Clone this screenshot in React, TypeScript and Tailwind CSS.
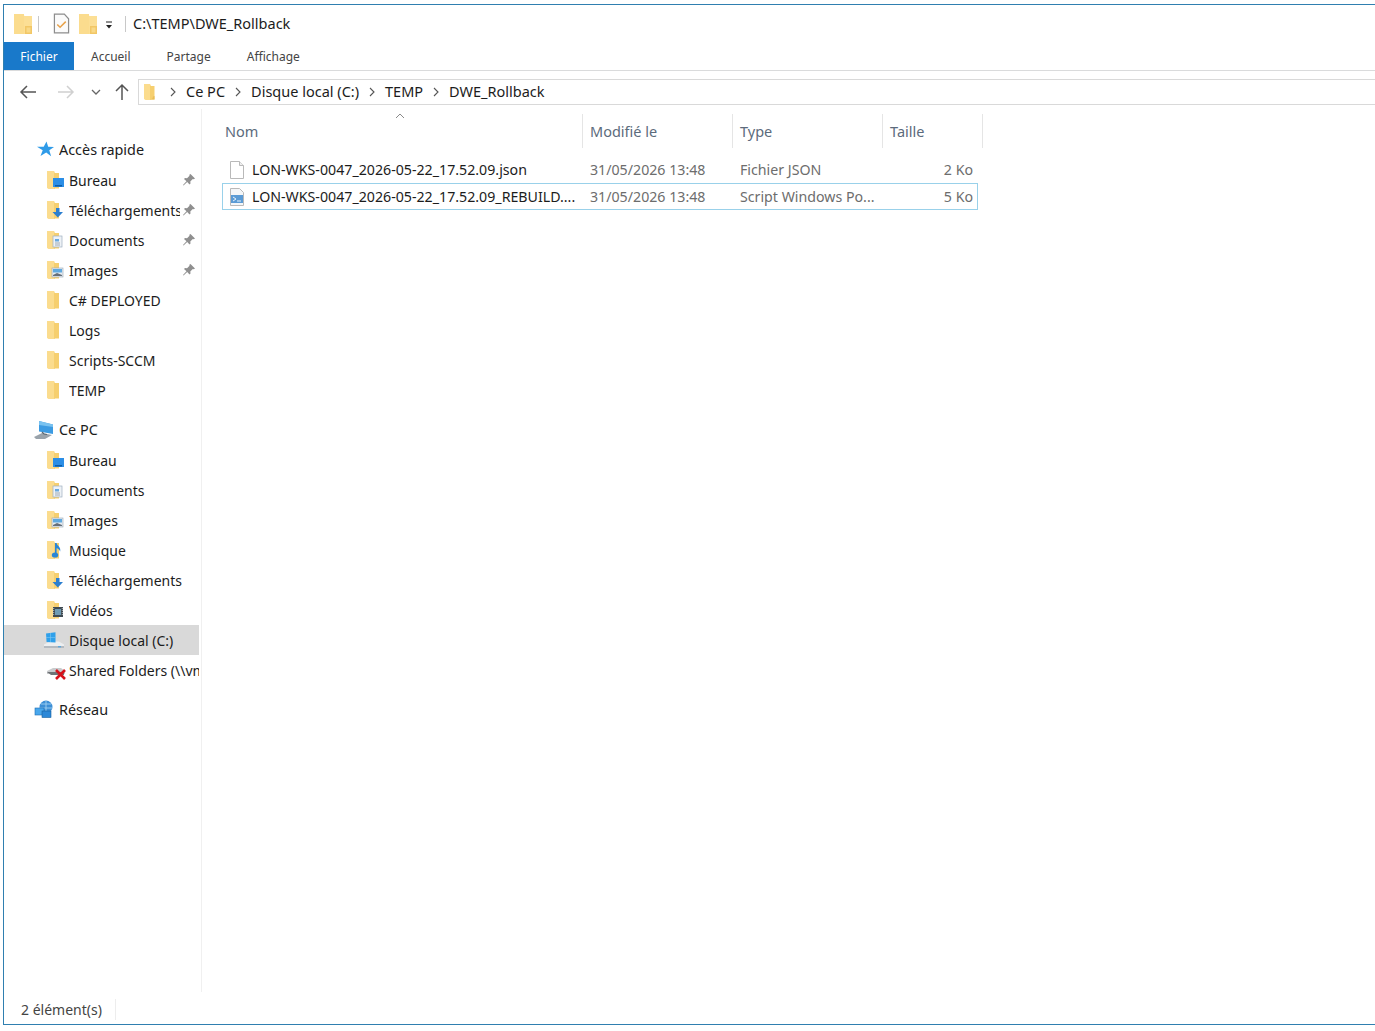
import type { ReactNode } from 'react';

const font = { fontFamily: '"Noto Sans", "Open Sans", sans-serif' };

function Folder({ className = 'w-[20px] h-[20px]' }: { className?: string }) {
  return (
    <svg viewBox="0 0 20 20" className={className}>
      <path d="M3 2h6l1 1.500V18H4.500L3 17z" fill="#fbdc8e" />
      <path d="M9 4h4.500v13.500H9z" fill="#f6cf6f" />
      <path d="M9 17.600h4.500V14l-1.500.5-.5 2z" fill="#e9bd57" />
    </svg>
  );
}

// the quick access toolbar folder is wider than the nav ones
function BigFolder() {
  return (
    <svg viewBox="0 0 18 20" className="w-[18px] h-[20px] shrink-0">
      <path d="M0 0h9l1.500 2H18v20H0z" fill="#fcdf95" />
      <path d="M0 0h10v20H0z" fill="#fbdc8e" />
      <path d="M11 12h7v8h-7z" fill="#f2c766" />
      <path d="M12.500 13.500h4v5h-4z" fill="#f9d988" />
    </svg>
  );
}

function Badge({ kind }: { kind: string }) {
  if (kind === 'desktop')
    return (
      <g>
        <rect x="8" y="8" width="11" height="9" fill="#2b8ee6" />
        <rect x="10" y="15" width="7" height="1.500" fill="#0c5da8" />
      </g>
    );
  if (kind === 'download')
    return <path d="M11 8h3.500v4H18l-5.200 5.500L7.500 12H11z" fill="#2b7fd0" />;
  if (kind === 'docs')
    return (
      <g>
        <rect x="8" y="6" width="9" height="11" fill="#eef2f6" stroke="#9fb0c0" strokeWidth="0.7" />
        <rect x="10" y="9" width="4" height="2.500" fill="#6aa9df" />
        <path d="M10 13h5M10 15h5" stroke="#8c9aa8" strokeWidth="0.8" />
      </g>
    );
  if (kind === 'images')
    return (
      <g>
        <rect x="7" y="8" width="11" height="9" fill="#e6ecf1" stroke="#98a6b2" strokeWidth="0.6" />
        <rect x="8" y="9" width="9" height="3.500" fill="#5fa9e0" />
        <path d="M8 15l4-2 5 2v1H8z" fill="#66707a" />
      </g>
    );
  if (kind === 'music')
    return (
      <g>
        <ellipse cx="10" cy="15" rx="3.200" ry="2.600" fill="#2a86d6" />
        <path d="M11.600 3v12h-1.600V3zM11.600 3c.5 3 4.500 3.500 3.600 8.500-.7-2-2.200-3-3.600-3.200z" fill="#2a86d6" />
      </g>
    );
  return (
    <g>
      <rect x="8" y="7" width="10" height="10" fill="#3f4a52" />
      <rect x="10" y="9" width="6" height="6" fill="#6e9bb4" />
      <path d="M8.700 8v8M17.300 8v8" stroke="#d5dde2" strokeWidth="0.8" strokeDasharray="1 1" />
    </g>
  );
}

function LibIcon({ kind }: { kind?: string }) {
  return (
    <svg viewBox="0 0 20 20" className="w-[20px] h-[20px] shrink-0">
      <path d="M2 1h7l1 1.500V19H3.500L2 18z" fill="#fbdc8e" />
      <path d="M9 3h5v15.500H9z" fill="#f6cf6f" />
      {kind && <Badge kind={kind} />}
    </svg>
  );
}

function DriveIcon() {
  return (
    <svg viewBox="0 0 22 20" className="w-[22px] h-[20px] shrink-0 ml-[-2px]">
      <path d="M1 14.500l6-3h9l5 3v2.500H1z" fill="#eceef0" />
      <path d="M1 16h20v2H1z" fill="#b4bac0" />
      <rect x="15" y="16.300" width="3" height="1" fill="#3aa0e6" />
      <path d="M3 3.500l9.500-1.300v10.400L3.600 12z" fill="#2fa0ea" />
      <path d="M3 7.500h9.500M7.500 3v9" stroke="#7cc6f2" strokeWidth="0.6" />
    </svg>
  );
}

function NetDriveIcon() {
  return (
    <svg viewBox="0 0 22 20" className="w-[22px] h-[20px] shrink-0">
      <path d="M2 11l6-3h8l4 3v3H2z" fill="#c9cbcd" />
      <path d="M2 12h17v3H6z" fill="#6f7376" />
      <path d="M11 10l9 9M20 10l-9 9" stroke="#d6121b" strokeWidth="2.600" />
    </svg>
  );
}

function PcIcon() {
  return (
    <svg viewBox="0 0 22 20" className="w-[22px] h-[20px] shrink-0 ml-[-2px]">
      <path d="M6 1l14 3.500v9.500L6 11.500z" fill="#3c9be2" />
      <path d="M6 1l14 3.500v2.500L6 5z" fill="#79c2f0" />
      <path d="M1 17l8-4 10 2-7 4H3z" fill="#9aa3ab" />
      <path d="M9 12l2 2 3 .5" stroke="#5c6873" strokeWidth="1.200" fill="none" />
    </svg>
  );
}

function NetworkIcon() {
  return (
    <svg viewBox="0 0 22 20" className="w-[22px] h-[20px] shrink-0 ml-[-2px]">
      <circle cx="13" cy="7" r="6.500" fill="#3d8fd6" />
      <path d="M8 4h10M7 8h12M13 1v12" stroke="#9fd0f2" strokeWidth="0.9" />
      <rect x="2" y="8" width="9" height="7" fill="#49a7ec" stroke="#1b6db4" strokeWidth="0.6" />
      <rect x="9" y="11" width="9" height="6.500" fill="#2c88d8" stroke="#17609f" strokeWidth="0.6" />
    </svg>
  );
}

function StarIcon() {
  return (
    <svg viewBox="0 0 20 20" className="w-[20px] h-[20px] shrink-0">
      <path d="M11.500 1.500l1.700 5.300 5.800.1-4.700 3.400 1.800 6-4.900-3.700-5.700 3.500 2.200-5.800L2 6.700l6.700.1z" fill="#2f9be8" />
    </svg>
  );
}

function Pin() {
  return (
    <svg viewBox="0 0 14 14" className="w-[14px] h-[14px] shrink-0">
      <path d="M8.500 1l4.500 4.500-1.200.8-1-.3L8.300 8.500l.2 2-1 1-2.300-2.500L1.500 12.500 1 12l3.500-3.700L2 6l1-1 2 .2L7.500 2.700l-.2-.9z" fill="#8f8f8f" />
    </svg>
  );
}

function Row({ icon, label, pin, active, head, clip }: { icon: ReactNode; label: string; pin?: boolean; active?: boolean; head?: boolean; clip?: boolean }) {
  return (
    <div className={`flex items-center h-[30px] w-[195px] ${active ? 'bg-[#d9d9d9]' : ''} ${head ? 'pl-[31px]' : 'pl-[41px]'}`}>
      <span className="w-[24px] shrink-0 flex items-center">{icon}</span>
      <span className={`${head ? 'text-[14.400px]' : 'text-[14px]'} text-[#1c1c1c] whitespace-nowrap overflow-hidden ${clip ? 'w-[111px]' : 'flex-1'}`}>{label}</span>
      {pin && (
        <span className="ml-auto mr-[3px]">
          <Pin />
        </span>
      )}
    </div>
  );
}

function Crumb({ label }: { label: string }) {
  return (
    <>
      <span className="text-[14.500px] text-[#1c1c1c]">{label}</span>
      <svg viewBox="0 0 8 10" className="w-[8px] h-[10px] mx-[9px]">
        <path d="M2 1l4 4-4 4" stroke="#555" strokeWidth="1.100" fill="none" />
      </svg>
    </>
  );
}

function HeaderCell({ label, width, pad = 'pl-[7px]' }: { label: string; width: string; pad?: string }) {
  return (
    <div className={`${width} ${pad} h-[34px] pt-[1px] border-r border-[#e5e5e5] flex items-center text-[14.500px] text-[#5c6b7c]`}>
      {label}
    </div>
  );
}

export default function App() {
  return (
    <div style={font} className="w-[1375px] h-[1031px] bg-white pt-[4px] pb-[6px] pl-[3px] overflow-hidden">
      <div className="h-full border-l border-t border-b border-[#2f7fb0] flex flex-col">
        {/* Title bar */}
        <div className="h-[37px] flex items-center shrink-0">
          <span className="ml-[10px]">
            <BigFolder />
          </span>
          <span className="w-px h-[16px] bg-[#c8c8c8] ml-[6px]" />
          <svg viewBox="0 0 18 22" className="w-[17px] h-[21px] ml-[14px]">
            <path d="M1.500 1h10.500l4.500 5v15H1.500z" fill="#fbfbfb" stroke="#8d8d8d" strokeWidth="1.300" />
            <path d="M4.500 12l3 3 6-6" stroke="#e8a24a" strokeWidth="1.600" fill="none" />
          </svg>
          <span className="ml-[9px]">
            <BigFolder />
          </span>
          <svg viewBox="0 0 10 10" className="w-[10px] h-[10px] ml-[7px] mt-[3px]">
            <path d="M2 2h6" stroke="#222" strokeWidth="1" />
            <path d="M2 5h6L5 8.500z" fill="#222" />
          </svg>
          <span className="w-px h-[16px] bg-[#c8c8c8] ml-[11px]" />
          <span className="ml-[7px] text-[14.500px] text-[#1c1c1c]">C:\TEMP\DWE_Rollback</span>
        </div>

        {/* Ribbon tabs */}
        <div className="h-[29px] flex items-stretch border-b border-[#dadbdc] shrink-0 text-[12px] text-[#444]">
          <div className="w-[70px] bg-[#1979ca] text-white flex items-center justify-center pt-[2px]">Fichier</div>
          <div className="ml-[17px] flex items-center pt-[2px]">Accueil</div>
          <div className="ml-[36px] flex items-center pt-[2px]">Partage</div>
          <div className="ml-[36px] flex items-center pt-[2px]">Affichage</div>
        </div>

        {/* Address bar */}
        <div className="h-[34px] flex items-center shrink-0 mt-[4px]">
          <svg viewBox="0 0 18 14" className="w-[18px] h-[14px] ml-[15px]">
            <path d="M17 7H2M8 1L2 7l6 6" stroke="#555" strokeWidth="1.500" fill="none" />
          </svg>
          <svg viewBox="0 0 18 14" className="w-[18px] h-[14px] ml-[20px]">
            <path d="M1 7h15M10 1l6 6-6 6" stroke="#d0d0d0" strokeWidth="1.500" fill="none" />
          </svg>
          <svg viewBox="0 0 10 6" className="w-[10px] h-[6px] ml-[16px]">
            <path d="M1 1l4 4 4-4" stroke="#666" strokeWidth="1.300" fill="none" />
          </svg>
          <svg viewBox="0 0 14 18" className="w-[14px] h-[18px] ml-[14px]">
            <path d="M7 17V2M1 8l6-6 6 6" stroke="#555" strokeWidth="1.500" fill="none" />
          </svg>
          <div className="ml-[9px] flex-1 h-[26px] border-t border-b border-l border-[#d9d9d9] flex items-center">
            <span className="ml-[2px]">
              <Folder />
            </span>
            <svg viewBox="0 0 8 10" className="w-[8px] h-[10px] ml-[8px] mr-[9px]">
              <path d="M2 1l4 4-4 4" stroke="#555" strokeWidth="1.100" fill="none" />
            </svg>
            <Crumb label="Ce PC" />
            <Crumb label="Disque local (C:)" />
            <Crumb label="TEMP" />
            <span className="text-[14.500px] text-[#1c1c1c]">DWE_Rollback</span>
          </div>
        </div>

        {/* Main */}
        <div className="flex-1 flex min-h-0">
          <nav className="w-[198px] border-r border-[#f0f0f0] shrink-0 pt-[26px] mb-[2px]">
            <Row head icon={<StarIcon />} label="Accès rapide" />
            <Row icon={<LibIcon kind="desktop" />} label="Bureau" pin />
            <Row icon={<LibIcon kind="download" />} label="Téléchargements" pin clip />
            <Row icon={<LibIcon kind="docs" />} label="Documents" pin />
            <Row icon={<LibIcon kind="images" />} label="Images" pin />
            <Row icon={<LibIcon />} label="C# DEPLOYED" />
            <Row icon={<LibIcon />} label="Logs" />
            <Row icon={<LibIcon />} label="Scripts-SCCM" />
            <Row icon={<LibIcon />} label="TEMP" />
            <div className="h-[10px]" />
            <Row head icon={<PcIcon />} label="Ce PC" />
            <Row icon={<LibIcon kind="desktop" />} label="Bureau" />
            <Row icon={<LibIcon kind="docs" />} label="Documents" />
            <Row icon={<LibIcon kind="images" />} label="Images" />
            <Row icon={<LibIcon kind="music" />} label="Musique" />
            <Row icon={<LibIcon kind="download" />} label="Téléchargements" />
            <Row icon={<LibIcon kind="video" />} label="Vidéos" />
            <Row active icon={<DriveIcon />} label="Disque local (C:)" />
            <Row icon={<NetDriveIcon />} label="Shared Folders (\\vmware-host)" />
            <div className="h-[10px]" />
            <Row head icon={<NetworkIcon />} label="Réseau" />
          </nav>

          <main className="flex-1 pl-[20px] pt-[5px]">
            <div className="relative flex">
              <svg viewBox="0 0 10 6" className="absolute left-[173px] top-[-1px] w-[10px] h-[6px]">
                <path d="M1 5l4-4 4 4" stroke="#8a8a8a" strokeWidth="1" fill="none" />
              </svg>
              <HeaderCell label="Nom" width="w-[361px]" pad="pl-[3px]" />
              <HeaderCell label="Modifié le" width="w-[150px]" />
              <HeaderCell label="Type" width="w-[150px]" />
              <HeaderCell label="Taille" width="w-[100px]" />
            </div>

            <div className="mt-[8px] w-[756px] h-[27px] border border-transparent flex items-center text-[14.200px]">
              <svg viewBox="0 0 16 18" className="w-[16px] h-[18px] ml-[6px] shrink-0">
                <path d="M1.500.5h9l4 4v13h-13z" fill="#fff" stroke="#b9b9b9" />
                <path d="M10.500.5v4h4" fill="#f0f0f0" stroke="#b9b9b9" />
              </svg>
              <span className="w-[338px] ml-[7px] text-[#1c1c1c] whitespace-nowrap">LON-WKS-0047_2026-05-22_17.52.09.json</span>
              <span className="w-[150px] text-[#6d6d6d]">31/05/2026 13:48</span>
              <span className="w-[155px] text-[#6d6d6d]">Fichier JSON</span>
              <span className="w-[78px] text-right text-[#6d6d6d]">2 Ko</span>
            </div>
            <div className="w-[756px] h-[27px] border border-[#99d1ea] flex items-center text-[14.200px]">
              <svg viewBox="0 0 16 18" className="w-[16px] h-[18px] ml-[6px] shrink-0">
                <path d="M1.500.5h9l4 4v13h-13z" fill="#f4f6f8" stroke="#b9b9b9" />
                <rect x="2" y="7" width="12" height="8" fill="#5b9bd5" />
                <path d="M4 9l3 2-3 2M8 13h4" stroke="#e8f2fa" fill="none" />
              </svg>
              <span className="w-[338px] ml-[7px] text-[#1c1c1c] whitespace-nowrap">LON-WKS-0047_2026-05-22_17.52.09_REBUILD....</span>
              <span className="w-[150px] text-[#6d6d6d]">31/05/2026 13:48</span>
              <span className="w-[155px] text-[#6d6d6d]">Script Windows Po...</span>
              <span className="w-[78px] text-right text-[#6d6d6d]">5 Ko</span>
            </div>
          </main>
        </div>

        {/* Status bar */}
        <div className="h-[30px] shrink-0 flex items-center pl-[17px] text-[14px] text-[#444]">
          <span className="w-[95px] border-r border-[#ededed]">2 élément(s)</span>
        </div>
      </div>
    </div>
  );
}
